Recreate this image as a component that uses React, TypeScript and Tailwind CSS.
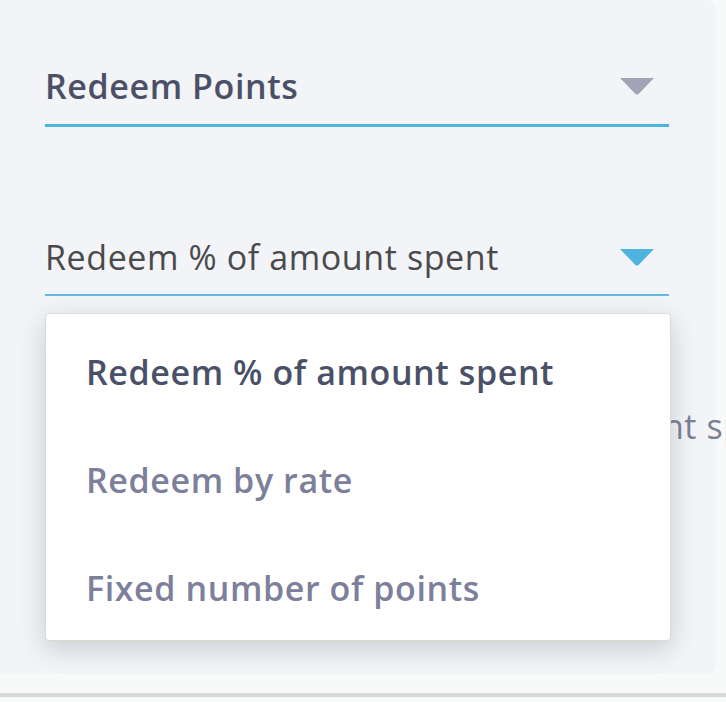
import { useState } from "react";

const OPTIONS = [
  "Redeem % of amount spent",
  "Redeem by rate",
  "Fixed number of points",
];

function Caret({ color }: { color: string }) {
  return (
    <svg width="34" height="17" viewBox="0 0 34 17" className="shrink-0">
      <path d="M0 0 H34 L18.5 16 Q17 17.2 15.5 16 Z" fill={color} />
    </svg>
  );
}

export default function App() {
  const [selected] = useState(0);

  return (
    <div className="w-[726px] h-[702px] bg-[#f8f9f9] font-['Open_Sans',sans-serif] overflow-hidden">
      <div className="relative w-[716px] h-[674px] bg-[#f2f4f7] rounded-r-[10px] pl-[45px]">
        {/* Field: type */}
        <div className="w-[624px] pt-[62px]">
          <div className="flex items-center justify-between h-[48px] pr-[15px]">
            <span className="text-[34px] leading-[48px] tracking-[0.6px] font-semibold text-[#4b5067]">
              Redeem Points
            </span>
            <Caret color="#a2a4b6" />
          </div>
          <div className="mt-[14px] h-[3px] bg-[#4fb3e0]" />
        </div>

        {/* Field: redeem method */}
        <div className="relative w-[624px] mt-[106px]">
          <div className="flex items-center justify-between h-[48px] pr-[15px]">
            <span className="text-[34px] leading-[48px] tracking-[0.6px] text-[#4a4a4c]">
              {OPTIONS[selected]}
            </span>
            <Caret color="#4fb3e0" />
          </div>
          <div className="mt-[13px] h-[2px] bg-[#62b9e2]" />

          <p className="mt-[106px] whitespace-nowrap text-[34px] leading-[48px] tracking-[0.6px] text-[#7b7f96]">
            Members may redeem % of the amount spent
          </p>

          {/* Open menu */}
          <div className="absolute left-0 top-[80px] w-[626px] h-[328px] pt-[4px] bg-white rounded-[4px] border border-[#d9dbd3] shadow-[0_8px_26px_rgba(40,50,60,0.2)]">
            {OPTIONS.map((opt, i) => (
              <div
                key={opt}
                className={`flex items-center h-[108px] pl-[40px] text-[34px] tracking-[0.6px] font-semibold ${
                  i === selected ? "text-[#4a5068]" : "text-[#7c809b]"
                }`}
              >
                {opt}
              </div>
            ))}
          </div>
        </div>
      </div>
      <div className="mt-[19px] h-[4px] bg-[#d8d8d8]" />
    </div>
  );
}
